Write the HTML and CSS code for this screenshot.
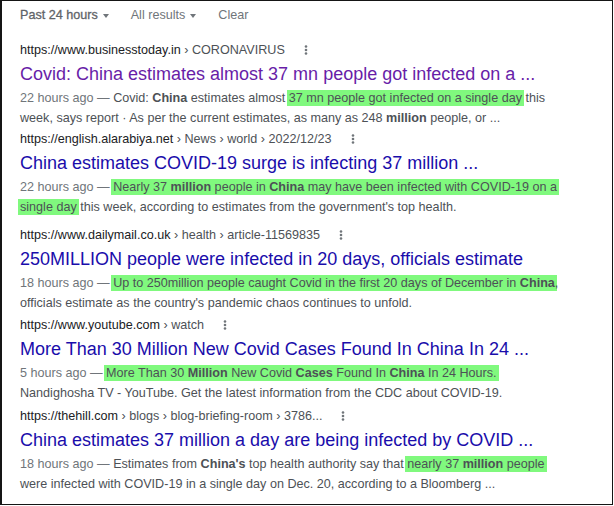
FILE: index.html
```html
<!DOCTYPE html>
<html lang="en">
<head>
<meta charset="utf-8">
<title>Search results</title>
<link rel="stylesheet" href="styles.css">
</head>
<body>
<div class="frame">
  <div class="filters">
    <span class="filter filter-active">Past 24 hours<span class="caret"></span></span>
    <span class="filter">All results<span class="caret"></span></span>
    <span class="filter">Clear</span>
  </div>
  <div class="results">
    <div class="result">
      <div class="cite"><span class="host">https://www.businesstoday.in</span><span class="path"> › CORONAVIRUS</span><svg class="more" width="4" height="10" viewBox="0 0 4 10"><circle cx="2" cy="1.5" r="1.3"/><circle cx="2" cy="5" r="1.3"/><circle cx="2" cy="8.5" r="1.3"/></svg></div>
      <h3 class="title title-visited">Covid: China estimates almost 37 mn people got infected on a ...</h3>
      <div class="snippet"><span class="date">22 hours ago — </span>Covid: <b>China</b> estimates almost <span class="hl">37 mn people got infected on a single day</span> this week, says report · As per the current estimates, as many as 248 <b>million</b> people, or ...</div>
    </div>
    <div class="result result-gap-1">
      <div class="cite"><span class="host">https://english.alarabiya.net</span><span class="path"> › News › world › 2022/12/23</span><svg class="more" width="4" height="10" viewBox="0 0 4 10"><circle cx="2" cy="1.5" r="1.3"/><circle cx="2" cy="5" r="1.3"/><circle cx="2" cy="8.5" r="1.3"/></svg></div>
      <h3 class="title">China estimates COVID-19 surge is infecting 37 million ...</h3>
      <div class="snippet"><span class="date">22 hours ago — </span><span class="hl">Nearly 37 <b>million</b> people in <b>China</b> may have been infected with COVID-19 on a single day</span> this week, according to estimates from the government's top health.</div>
    </div>
    <div class="result result-gap-8">
      <div class="cite"><span class="host">https://www.dailymail.co.uk</span><span class="path"> › health › article-11569835</span><svg class="more" width="4" height="10" viewBox="0 0 4 10"><circle cx="2" cy="1.5" r="1.3"/><circle cx="2" cy="5" r="1.3"/><circle cx="2" cy="8.5" r="1.3"/></svg></div>
      <h3 class="title">250MILLION people were infected in 20 days, officials estimate</h3>
      <div class="snippet"><span class="date">18 hours ago — </span><span class="hl">Up to 250million people caught Covid in the first 20 days of December in <b>China</b></span>, officials estimate as the country's pandemic chaos continues to unfold.</div>
    </div>
    <div class="result result-gap-2">
      <div class="cite"><span class="host">https://www.youtube.com</span><span class="path"> › watch</span><svg class="more" width="4" height="10" viewBox="0 0 4 10"><circle cx="2" cy="1.5" r="1.3"/><circle cx="2" cy="5" r="1.3"/><circle cx="2" cy="8.5" r="1.3"/></svg></div>
      <h3 class="title">More Than 30 Million New Covid Cases Found In China In 24 ...</h3>
      <div class="snippet"><span class="date">5 hours ago — </span><span class="hl">More Than 30 <b>Million</b> New Covid <b>Cases</b> Found In <b>China</b> In 24 Hours.</span> Nandighosha TV - YouTube. Get the latest information from the CDC about COVID-19.</div>
    </div>
    <div class="result result-gap-3">
      <div class="cite"><span class="host">https://thehill.com</span><span class="path"> › blogs › blog-briefing-room › 3786...</span><svg class="more" width="4" height="10" viewBox="0 0 4 10"><circle cx="2" cy="1.5" r="1.3"/><circle cx="2" cy="5" r="1.3"/><circle cx="2" cy="8.5" r="1.3"/></svg></div>
      <h3 class="title">China estimates 37 million a day are being infected by COVID ...</h3>
      <div class="snippet"><span class="date">18 hours ago — </span>Estimates from <b>China's</b> top health authority say that <span class="hl">nearly 37 <b>million</b> people</span> were infected with COVID-19 in a single day on Dec. 20, according to a Bloomberg ...</div>
    </div>
  </div>
</div>
</body>
</html>
```

FILE: styles.css
```css
html, body {
  margin: 0;
  padding: 0;
  background: #ffffff;
}

body {
  font-family: "Liberation Sans", Arial, sans-serif;
}

.frame {
  width: 613px;
  height: 505px;
  box-sizing: border-box;
  border: 1px solid #151515;
  border-left-width: 2px;
  padding-left: 18px;
  background: #ffffff;
}

.filters {
  display: flex;
  align-items: center;
  gap: 22px;
  height: 28px;
  font-size: 12.6px;
  color: #70757a;
}

.filter {
  display: flex;
  align-items: center;
}

.filter-active {
  color: #5f6368;
  -webkit-text-stroke: 0.3px #5f6368;
}

.caret {
  width: 0;
  height: 0;
  margin-left: 5px;
  margin-top: 2px;
  border-left: 3.5px solid transparent;
  border-right: 3.5px solid transparent;
  border-top: 4px solid #70757a;
}

.results {
  margin-top: 11px;
}

.result-gap-1 { margin-top: 1px; }
.result-gap-2 { margin-top: 2px; }
.result-gap-3 { margin-top: 3px; }
.result-gap-8 { margin-top: 8px; }

.cite {
  height: 20px;
  line-height: 20px;
  font-size: 12.6px;
  white-space: nowrap;
}

.host {
  color: #202124;
}

.path {
  color: #4d5156;
}

.more {
  margin-left: 19px;
  vertical-align: -1px;
  fill: #70757a;
}

.title {
  margin: 0;
  font-size: 18px;
  font-weight: 400;
  line-height: 28px;
  color: #1a0dab;
  white-space: nowrap;
}

.title-visited {
  color: #681da8;
}

.snippet {
  width: 546px;
  font-size: 12.6px;
  line-height: 20px;
  color: #4d5156;
}

.snippet b {
  font-weight: 700;
}

.date {
  color: #70757a;
}

.hl {
  background: #80f97e;
  padding: 1px 0;
  box-shadow: -2px 0 0 #80f97e, 2px 0 0 #80f97e;
  -webkit-box-decoration-break: clone;
  box-decoration-break: clone;
}
```
